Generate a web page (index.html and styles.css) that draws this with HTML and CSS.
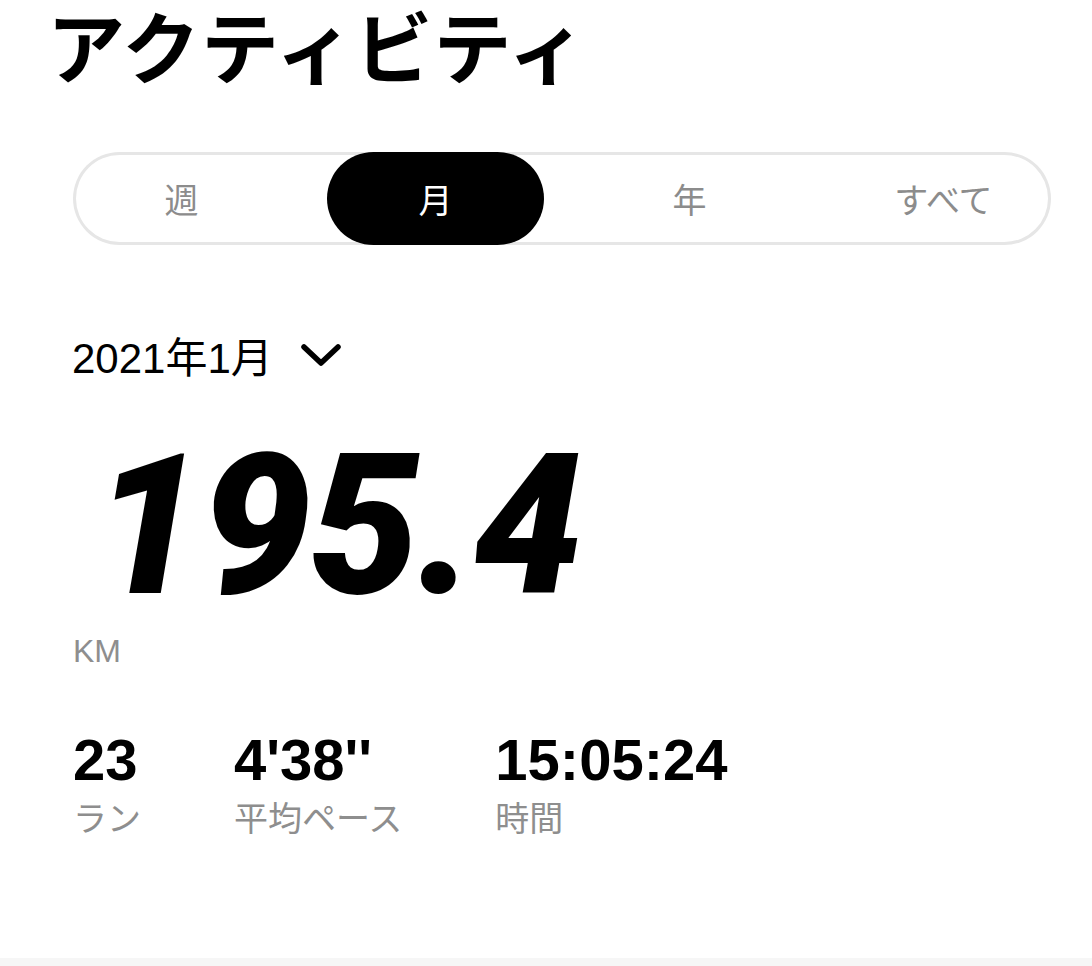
FILE: index.html
```html
<!DOCTYPE html>
<html lang="ja">
<head>
<meta charset="utf-8">
<title>アクティビティ</title>
<link rel="stylesheet" href="styles.css">
</head>
<body>
<div class="screen">
  <main class="page">
    <h1 class="title">アクティビティ</h1>
    <div class="segments">
      <button class="seg">週</button>
      <button class="seg seg-active">月</button>
      <button class="seg">年</button>
      <button class="seg">すべて</button>
    </div>
    <div class="period">
      <span class="period-text">2021年1月</span>
      <svg class="chevron" width="40" height="26" viewBox="0 0 40 26"><path d="M3 5 L20 21 L37 5" fill="none" stroke="#000" stroke-width="5.5" stroke-linecap="round" stroke-linejoin="round"/></svg>
    </div>
    <div class="total">
      <div class="total-value">195.4</div>
      <div class="total-unit">KM</div>
    </div>
    <div class="stats">
      <div class="stat"><div class="stat-value">23</div><div class="stat-label">ラン</div></div>
      <div class="stat"><div class="stat-value">4'38''</div><div class="stat-label">平均ペース</div></div>
      <div class="stat"><div class="stat-value">15:05:24</div><div class="stat-label">時間</div></div>
    </div>
  </main>
  <div class="bottom-bar"></div>
</div>
</body>
</html>
```
FILE: styles.css
```css
* { box-sizing: border-box; }
html, body { margin: 0; padding: 0; background: #fff; }
body {
  font-family: "Liberation Sans", "Noto Sans CJK JP", sans-serif;
  color: #000;
}
.screen {
  display: flex;
  flex-direction: column;
  min-height: 100vh;
}
.page {
  flex: 1;
  padding: 0 0 0 73px;
}
.title {
  margin: 0 0 0 -26px;
  padding-top: 0;
  font-family: "Noto Sans CJK JP", sans-serif;
  font-weight: 700;
  font-size: 78px;
  line-height: 88px;
  letter-spacing: 1px;
}
.segments {
  margin-top: 64px;
  width: 978px;
  height: 93px;
  border-radius: 47px;
  box-shadow: inset 0 0 0 3px #e6e6e6;
  display: grid;
  grid-template-columns: repeat(4, 217px);
  column-gap: 37px;
}
.seg {
  border: 0;
  background: transparent;
  font-family: "Noto Sans CJK JP", sans-serif;
  font-weight: 400;
  font-size: 34px;
  color: #8c8c8c;
  border-radius: 47px;
  padding: 0;
  display: flex;
  align-items: center;
  justify-content: center;
}
.seg-active {
  background: #000;
  color: #fff;
}
.period {
  margin-top: 84px;
  display: flex;
  align-items: center;
  gap: 28px;
  height: 50px;
}
.period-text {
  font-size: 42px;
  margin-left: -1px;
}
.chevron { display: block; margin-top: 2px; }
.total { margin-top: 52px; }
.total-value {
  font-family: "Roboto", "Liberation Sans", sans-serif;
  font-weight: 900;
  font-style: italic;
  font-size: 196px;
  line-height: 190px;
  margin-left: 20px;
  letter-spacing: -2px;
}
.total-unit {
  margin-top: 12px;
  font-size: 32px;
  color: #8e8e8e;
}
.stats {
  margin-top: 60px;
  display: flex;
  gap: 93px;
}
.stat-value {
  font-size: 58px;
  font-weight: 700;
  line-height: 60px;
}
.stat-label {
  font-family: "Noto Sans CJK JP", sans-serif;
  font-size: 34px;
  color: #8e8e8e;
  line-height: 44px;
  margin-top: 5px;
}
.bottom-bar {
  height: 8px;
  background: #f6f6f6;
}
```
